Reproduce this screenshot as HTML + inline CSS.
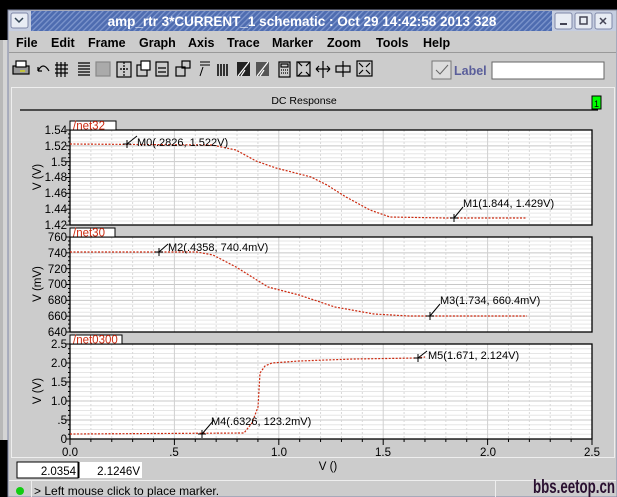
<!DOCTYPE html>
<html><head><meta charset="utf-8"><style>
html,body{margin:0;padding:0;width:617px;height:497px;overflow:hidden;background:#000}
svg{display:block}
text{font-family:"Liberation Sans","DejaVu Sans",sans-serif}
</style></head><body>
<svg id="s" width="617" height="497" viewBox="0 0 617 497" xmlns="http://www.w3.org/2000/svg">
<rect width="617" height="497" fill="#000"/>
<rect x="0" y="40" width="8" height="400" fill="#d4d4d4"/>
<rect x="0" y="40" width="3" height="400" fill="#b8b8b8"/>
<rect x="8" y="10" width="609" height="487" fill="#cccccc"/>
<rect x="8" y="10" width="609" height="487" fill="none" stroke="#7f88a8" stroke-width="1"/>
<defs>
<pattern id="h" width="4" height="4" patternUnits="userSpaceOnUse" patternTransform="rotate(45)">
<rect width="4" height="4" fill="#4e6cb0"/><rect width="1.3" height="4" fill="#7d95cc"/></pattern>
</defs>
<rect x="31" y="11" width="521" height="20" fill="url(#h)"/>
<rect x="9" y="11" width="22" height="20" fill="#c5cde0"/>
<rect x="11" y="13" width="17" height="15" fill="#e8ecf4" stroke="#7f88a8" rx="2"/>
<path d="M15 18 l4 4 l4 -4" fill="none" stroke="#345" stroke-width="1.5"/>
<rect x="552" y="11" width="64" height="20" fill="#c5cde0"/>
<rect x="555" y="13" width="17" height="16" fill="#e8ecf4" stroke="#7f88a8" rx="2"/>
<rect x="575" y="13" width="17" height="16" fill="#e8ecf4" stroke="#7f88a8" rx="2"/>
<rect x="595" y="13" width="17" height="16" fill="#e8ecf4" stroke="#7f88a8" rx="2"/>
<rect x="560" y="23" width="7" height="2" fill="#445"/>
<rect x="580" y="17" width="7" height="7" fill="none" stroke="#445" stroke-width="1.5"/>
<path d="M600 18 l6 6 M606 18 l-6 6" stroke="#445" stroke-width="1.5"/>
<text x="302" y="26" text-anchor="middle" fill="#fff" font-size="13.5" font-weight="bold">amp_rtr 3*CURRENT_1 schematic : Oct 29 14:42:58 2013 328</text>
<g font-size="12.5" font-weight="bold" fill="#000">
<text x="16" y="47">File</text><text x="51" y="47">Edit</text><text x="88" y="47">Frame</text>
<text x="139" y="47">Graph</text><text x="188" y="47">Axis</text><text x="227" y="47">Trace</text>
<text x="272" y="47">Marker</text><text x="327" y="47">Zoom</text><text x="376" y="47">Tools</text><text x="423" y="47">Help</text>
</g>
<line x1="9" y1="52.5" x2="616" y2="52.5" stroke="#999"/>
<g stroke="#000" fill="none" stroke-width="1.2">
<rect x="13" y="66" width="16" height="8" fill="#999"/><rect x="16" y="61" width="10" height="6" fill="#fff"/><line x1="20" y1="71" x2="25" y2="71" stroke="#dd0"/>
<path d="M38 71 q5 -10 11 0 M38 71 l0 -4 M38 71 l4 0"/>
<path d="M57 62v15M61 62v15M65 62v15M55 65h13M55 69h13M55 73h13"/>
<path d="M78 63h12M78 66h12M78 69h12M78 72h12M78 75h12"/>
<rect x="96" y="62" width="14" height="14" fill="#aaa" stroke="#888"/>
<rect x="117" y="62" width="14" height="15"/><path d="M124 62v15M120 69h8" stroke-dasharray="2 1"/>
<rect x="137" y="65" width="10" height="11"/><rect x="141" y="61" width="9" height="9" fill="#fff"/>
<rect x="156" y="62" width="12" height="14"/><path d="M158 68h8M158 72h8"/>
<rect x="176" y="67" width="9" height="9"/><rect x="182" y="61" width="8" height="7"/>
<path d="M200 62h10M200 65h10M203 67l-3 9" stroke-width="1"/>
<path d="M218 64v12M221 64v12M224 64v12M227 64v12" stroke-width="1.5"/>
<rect x="237" y="62" width="13" height="14" fill="#222" stroke="none"/><path d="M238 76l11 -14M241 76l4 -6" stroke="#fff"/>
<rect x="256" y="62" width="13" height="14" fill="#555" stroke="none"/><path d="M257 76l11 -14M260 76l4 -6" stroke="#fff"/>
<rect x="279" y="62" width="11" height="15"/><rect x="281" y="64" width="7" height="3"/><path d="M281 70h7M281 73h7" stroke-dasharray="1 1"/>
<path d="M298 62l4 4M310 62l-4 4M298 76l4 -4M310 76l-4 -4M297 62h13v14h-13z"/>
<path d="M323 61v17M316 69h14M316 69l3 -3M316 69l3 3M330 69l-3 -3M330 69l-3 3"/>
<path d="M343 61v16M336 66h14v6h-14z"/>
<rect x="357" y="61" width="15" height="15"/><path d="M359 63l4 4M370 63l-4 4M359 74l4 -4M370 74l-4 -4"/>
</g>
<rect x="432" y="61" width="19" height="18" fill="#ddd" stroke="#777"/>
<path d="M436 70l4 4l8 -9" fill="none" stroke="#666" stroke-width="1"/>
<text x="454" y="75" font-size="12.5" font-weight="bold" fill="#5a5e9a">Label</text>
<rect x="492" y="62" width="112" height="17" fill="#fff" stroke="#666"/>
<rect x="11.5" y="87.5" width="603" height="370" fill="#cccccc" stroke="#eee"/>
<text x="304" y="104" text-anchor="middle" font-size="10.5" fill="#000">DC Response</text>
<line x1="20" y1="110" x2="598" y2="110" stroke="#000" stroke-width="1.2"/>
<rect x="592" y="96" width="9" height="13" fill="#00ff00" stroke="#000"/>
<text x="594" y="107" font-size="9" fill="#000">1</text>
<g id="plots"></g>
<g id="lbl" font-size="11.5" fill="#000" text-anchor="end">
<text x="67" y="134">1.54</text><text x="67" y="150">1.52</text><text x="67" y="166">1.5</text><text x="67" y="181">1.48</text><text x="67" y="197">1.46</text><text x="67" y="213">1.44</text><text x="67" y="229">1.42</text>
<text x="67" y="241">760</text><text x="67" y="257">740</text><text x="67" y="273">720</text><text x="67" y="288">700</text><text x="67" y="304">680</text><text x="67" y="320">660</text><text x="67" y="336">640</text>
<text x="67" y="348">2.5</text><text x="67" y="367">2.0</text><text x="67" y="386">1.5</text><text x="67" y="405">1.0</text><text x="67" y="424">.5</text><text x="67" y="443">0</text>
</g>
<g font-size="11.5" fill="#000" text-anchor="middle">
<text transform="translate(41,177) rotate(-90)">V (V)</text>
<text transform="translate(41,284) rotate(-90)">V (mV)</text>
<text transform="translate(41,391) rotate(-90)">V (V)</text>
<text x="70" y="456">0.0</text><text x="174" y="456">.5</text><text x="279" y="456">1.0</text><text x="383" y="456">1.5</text><text x="488" y="456">2.0</text><text x="592" y="456">2.5</text>
<text x="328" y="470">V ()</text>
</g>
<g fill="none" stroke="#cc2a10" stroke-width="1.2" stroke-dasharray="2 1.5">
<polyline points="70,144 212,145 236,150 256,161 276,168 311,177 327,185 346,197 370,210 390,217 445,218 527,218"/>
<polyline points="70,252 197,252 213,255 236,267 268,287 299,295 335,307 374,314 409,316 527,316"/>
<polyline points="70,434 244,433 252,423 258,407 260,373 265,366 272,363 299,361 354,359 417,358 425,357"/>
</g>
<g stroke="#000" stroke-width="1" fill="none">
<path d="M123 144h8M127 140v8M127 144l10 -8"/>
<path d="M450 218h8M454 214v8M454 218l9 -11"/>
<path d="M155 252h8M159 248v8M159 252l9 -8"/>
<path d="M426 316h8M430 312v8M430 316l10 -12"/>
<path d="M198 434h8M202 430v8M202 434l12 -14"/>
<path d="M414 358h8M418 354v8M418 358l9 -7"/>
</g>
<g font-size="11" fill="#000">
<text x="137" y="146">M0(.2826, 1.522V)</text>
<text x="463" y="207">M1(1.844, 1.429V)</text>
<text x="168" y="251">M2(.4358, 740.4mV)</text>
<text x="440" y="304">M3(1.734, 660.4mV)</text>
<text x="211" y="425">M4(.6326, 123.2mV)</text>
<text x="428" y="359">M5(1.671, 2.124V)</text>
</g>
<rect x="17" y="462" width="61" height="16" fill="#fff" stroke="#000"/>
<rect x="79" y="462" width="63" height="16" fill="#fff"/>
<line x1="79" y1="462" x2="79" y2="478" stroke="#000"/>
<text x="76" y="475" text-anchor="end" font-size="11.5">2.0354</text>
<text x="140" y="475" text-anchor="end" font-size="11.5">2.1246V</text>
<line x1="9" y1="480.5" x2="616" y2="480.5" stroke="#eee"/>
<line x1="31.5" y1="481" x2="31.5" y2="497" stroke="#eee"/>
<line x1="495.5" y1="481" x2="495.5" y2="497" stroke="#eee"/>
<circle cx="20" cy="491" r="4" fill="#1c1"/>
<text x="34" y="495" font-size="12" fill="#000">&gt; Left mouse click to place marker.</text>
<text x="533" y="493" font-size="19" font-weight="bold" fill="#2a1030" textLength="82" lengthAdjust="spacingAndGlyphs">bbs.eetop.cn</text>
</svg>
<script>
(function(){
var ns="http://www.w3.org/2000/svg",g=document.getElementById("plots");
function el(n,a){var e=document.createElementNS(ns,n);for(var k in a)e.setAttribute(k,a[k]);g.appendChild(e);return e;}
var x0=70,x1=592,tops=[130,237,344],names=["/net32","/net30","/net0300"],tw=[46,45,52],nd=[6,6,5];
for(var p=0;p<3;p++){
 var t=tops[p],b=t+95;
 el("rect",{x:x0,y:t,width:x1-x0,height:95,fill:"#fff"});
 var n=nd[p],step=95/n;
 for(var i=0;i<n*4;i++){var y=t+i*step/4;el("line",{x1:x0,y1:y,x2:x1,y2:y,stroke:(i%4==0)?"#c8c8c8":"#e6e6e6"});}
 for(var j=1;j<25;j++){var x=x0+j*(x1-x0)/25;
  if(j%5==0)el("line",{x1:x,y1:t,x2:x,y2:b,stroke:"#d0d0d0"});
  else el("line",{x1:x,y1:t,x2:x,y2:b,stroke:"#d8d8d8","stroke-dasharray":"2 2"});}
 for(var i=0;i<=n*4;i++){var y=t+i*step/4;el("line",{x1:x0-(i%4==0?4:2),y1:y,x2:x0,y2:y,stroke:"#000"});}
 el("rect",{x:x0,y:t,width:x1-x0,height:95,fill:"none",stroke:"#000","stroke-width":1.3});
 el("rect",{x:x0,y:t-9,width:tw[p],height:9,fill:"#fff",stroke:"#000"});
 var tx=el("text",{x:x0+3,y:t-0.5,"font-size":"11.5",fill:"#cc2a10"});tx.textContent=names[p];
}
for(var j=0;j<=25;j++){var x=x0+j*(x1-x0)/25;el("line",{x1:x,y1:439,x2:x,y2:j%5==0?445:442,stroke:"#000"});}
})();
</script>
</body></html>
